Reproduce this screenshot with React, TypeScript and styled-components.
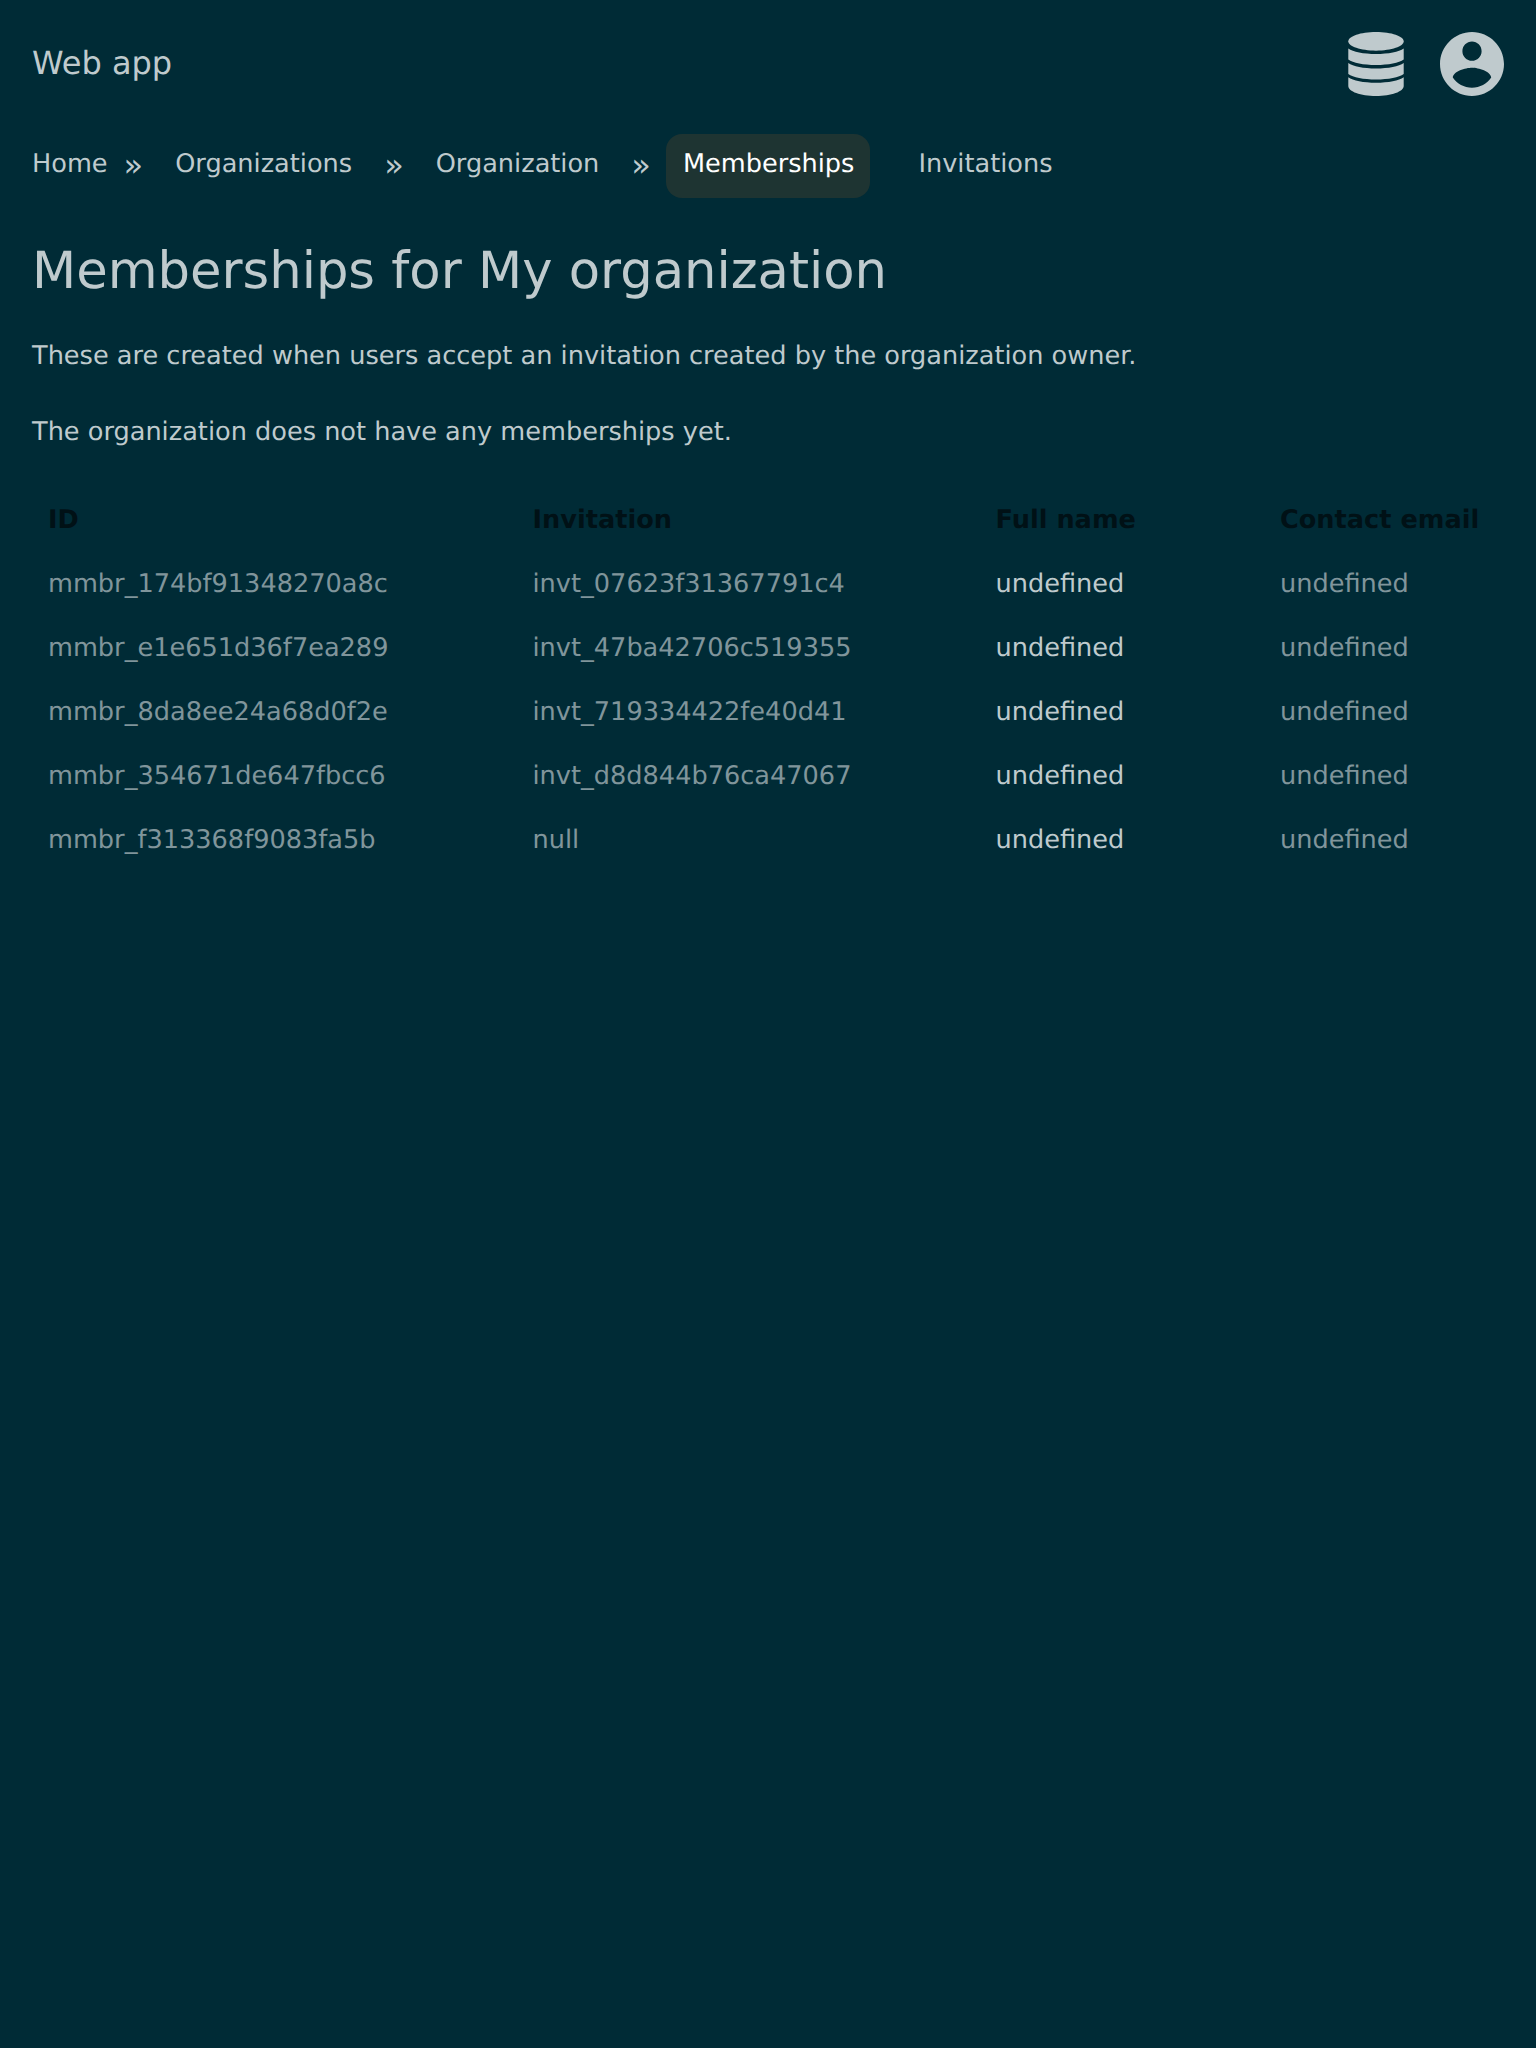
import React from "react";
import styled, { createGlobalStyle } from "styled-components";
import { IoMdContact } from "react-icons/io";

const colors = {
  background: "#002b36",
  text: "#bfcacd",
  muted: "#80959b",
  heading: "#001116",
  active: "#1e3432",
};

const GlobalStyle = createGlobalStyle`
  body {
    margin: 0;
    background: ${colors.background};
    color: ${colors.text};
    font: 25.6px/32px "DejaVu Sans", sans-serif;
    text-rendering: geometricPrecision;
  }
`;

const Page = styled.div`
  min-height: 2048px;
`;

const Header = styled.header`
  display: flex;
  align-items: center;
  justify-content: space-between;
  height: 64px;
  padding: 32px;
`;

const Brand = styled.a`
  font-size: 32px;
  padding-bottom: 2px;
`;

const Icons = styled.div`
  display: flex;
  gap: 32px;
`;

const DatabaseIcon = styled.svg`
  display: block;
  width: 64px;
  height: 64px;
  fill: ${colors.text};
`;

const AccountIcon = styled(IoMdContact).attrs({ viewBox: "48 48 416 416" })`
  display: block;
  width: 64px;
  height: 64px;
  color: ${colors.text};
`;

const Nav = styled.nav`
  display: flex;
  height: 64px;
  padding: 6px 16px 0;
  align-items: center;
`;

const Crumb = styled.a<{ $active?: boolean }>`
  display: flex;
  align-items: center;
  height: 64px;
  box-sizing: border-box;
  margin-left: ${(p) => (p.$active ? "-0.6px" : "0")};
  padding: 0 16px 4px ${(p) => (p.$active ? "16.6px" : "16px")};
  border-radius: 16px;
  background: ${(p) => (p.$active ? colors.active : "transparent")};
  color: ${(p) => (p.$active ? "#ffffff" : colors.text)};
`;

const Separator = styled.span<{ $wide?: boolean }>`
  font-size: 32px;
  padding: 0 16px 2px ${(p) => (p.$wide ? "16px" : "0")};
`;

const NavGap = styled.span`
  width: 32px;
`;

const Main = styled.main`
  padding: 0 32px;
`;

const Title = styled.h1`
  margin: 41px 0 34px;
  font-size: 51.2px;
  line-height: 64px;
  font-weight: 400;
`;

const Text = styled.p`
  margin: 0 0 38px;
  line-height: 38px;

  &:last-of-type {
    margin-bottom: 37px;
  }
`;

const Table = styled.table`
  width: 100%;
  border-collapse: collapse;
  table-layout: fixed;
`;

const HeadCell = styled.th`
  height: 64px;
  padding: 0 16px;
  color: ${colors.heading};
  text-align: left;
`;

const Cell = styled.td<{ $bright?: boolean }>`
  height: 64px;
  padding: 0 16px;
  color: ${(p) => (p.$bright ? colors.text : colors.muted)};
`;

const Column = styled.col<{ $width: number }>`
  width: ${(p) => p.$width}px;
`;

const memberships = [
  ["mmbr_174bf91348270a8c", "invt_07623f31367791c4"],
  ["mmbr_e1e651d36f7ea289", "invt_47ba42706c519355"],
  ["mmbr_8da8ee24a68d0f2e", "invt_719334422fe40d41"],
  ["mmbr_354671de647fbcc6", "invt_d8d844b76ca47067"],
  ["mmbr_f313368f9083fa5b", "null"],
];

export default function App() {
  return (
    <Page>
      <GlobalStyle />
      <Header>
        <Brand>Web app</Brand>
        <Icons>
          <DatabaseIcon viewBox="0 0 64 64">
            <path d="M32 0C47.5 0 59.7 4.2 59.7 9.35S47.5 18.7 32 18.7 4.3 14.5 4.3 9.35 16.5 0 32 0z" />
            <path d="M4.3 16.5C9 19.9 19.500 22 32 22s23-2.1 27.700-5.500V27.500C55 30.900 44.500 33 32 33S9 30.900 4.300 27.500z" />
            <path d="M4.3 30.900C9 34.300 19.500 36.400 32 36.400s23-2.100 27.700-5.500V41.900C55 45.300 44.500 47.400 32 47.400S9 45.300 4.300 41.900z" />
            <path d="M4.3 45.200C9 48.600 19.500 50.700 32 50.700s23-2.100 27.700-5.500V54C59.700 59.600 47.500 64 32 64S4.300 59.600 4.300 54z" />
          </DatabaseIcon>
          <AccountIcon />
        </Icons>
      </Header>
      <Nav>
        <Crumb>Home</Crumb>
        <Separator>»</Separator>
        <Crumb>Organizations</Crumb>
        <Separator $wide>»</Separator>
        <Crumb>Organization</Crumb>
        <Separator $wide>»</Separator>
        <Crumb $active>Memberships</Crumb>
        <NavGap />
        <Crumb>Invitations</Crumb>
      </Nav>
      <Main>
        <Title>Memberships for My organization</Title>
        <Text>These are created when users accept an invitation created by the organization owner.</Text>
        <Text>The organization does not have any memberships yet.</Text>
        <Table>
          <colgroup>
            <Column $width={484.5} />
            <Column $width={463} />
            <Column $width={284.5} />
            <Column $width={240} />
          </colgroup>
          <thead>
            <tr>
              <HeadCell>ID</HeadCell>
              <HeadCell>Invitation</HeadCell>
              <HeadCell>Full name</HeadCell>
              <HeadCell>Contact email</HeadCell>
            </tr>
          </thead>
          <tbody>
            {memberships.map(([id, invitation]) => (
              <tr key={id}>
                <Cell>{id}</Cell>
                <Cell>{invitation}</Cell>
                <Cell $bright>undefined</Cell>
                <Cell>undefined</Cell>
              </tr>
            ))}
          </tbody>
        </Table>
      </Main>
    </Page>
  );
}
